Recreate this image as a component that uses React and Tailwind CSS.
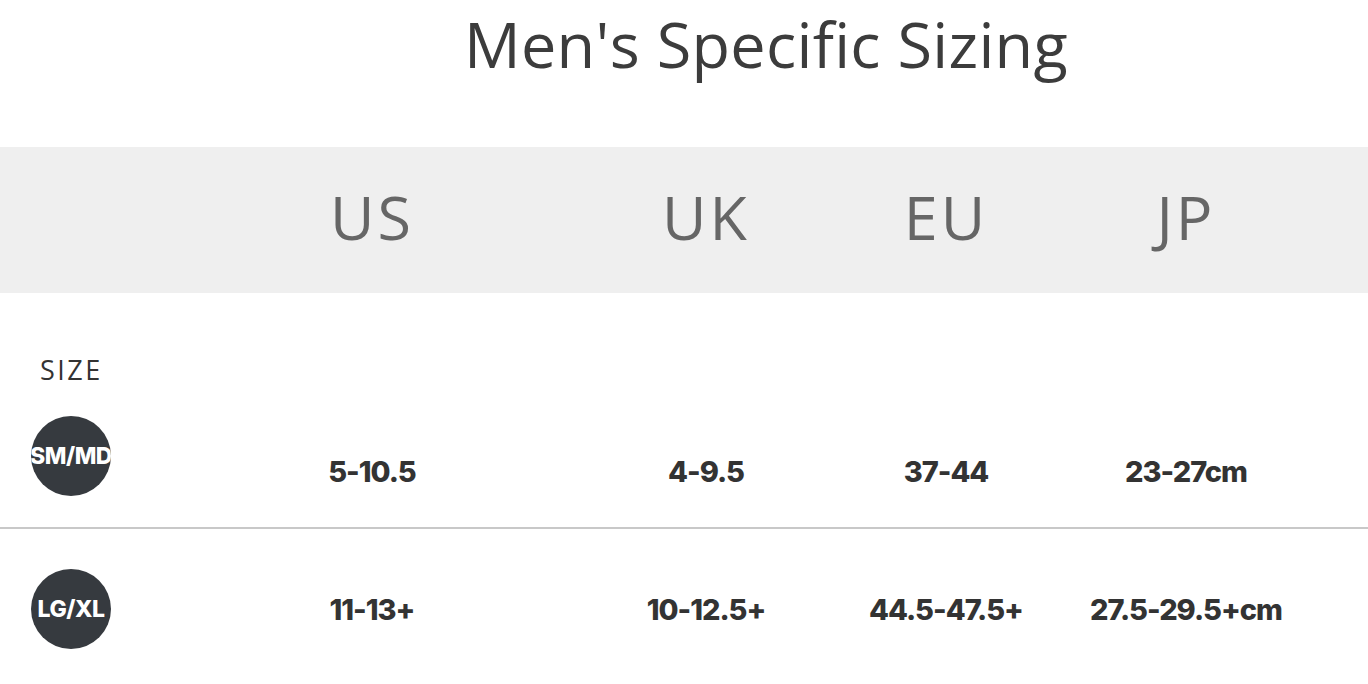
const columns = ['US', 'UK', 'EU', 'JP']

const rows = [
  { size: 'SM/MD', values: ['5-10.5', '4-9.5', '37-44', '23-27cm'] },
  { size: 'LG/XL', values: ['11-13+', '10-12.5+', '44.5-47.5+', '27.5-29.5+cm'] },
]

const grid = 'grid grid-cols-[158px_428px_240px_240px_240px]'

const SizeBadge = ({ label }) => (
  <div className="ml-[31px] w-20 h-20 rounded-full bg-[#363a3f] overflow-hidden flex items-center justify-center">
    <span className="whitespace-nowrap text-white font-extrabold text-[23px] leading-none tracking-[-0.5px] font-['Inter',sans-serif]">
      {label}
    </span>
  </div>
)

const Value = ({ children }) => (
  <div className="text-center text-[#333333] font-extrabold text-[29px] leading-none tracking-[-1px] font-['Inter',sans-serif]">
    {children}
  </div>
)

export default function App() {
  return (
    <div className="w-[1368px] h-[684px] bg-white overflow-hidden font-['Open_Sans',sans-serif]">
      <div className="h-[147px] pl-[164px] pt-[12px] flex justify-center">
        <h1 className="text-[63px] leading-none text-[#3c3c3c] font-normal tracking-[0.3px]">Men's Specific Sizing</h1>
      </div>

      <div className={`${grid} h-[146px] bg-[#efefef] items-center pb-[7px]`}>
        <div />
        {columns.map((c) => (
          <div key={c} className="text-center text-[61px] leading-none text-[#666666] tracking-[3px]">
            {c}
          </div>
        ))}
      </div>

      <div className="pt-[63px] pl-[40px] h-[123px]">
        <span className="text-[27px] leading-none text-[#333333] tracking-[2.5px]">SIZE</span>
      </div>

      <div className={`${grid} h-[111px] items-center`}>
        <div className="self-start">
          <SizeBadge label={rows[0].size} />
        </div>
        {rows[0].values.map((v) => (
          <Value key={v}>{v}</Value>
        ))}
      </div>

      <div className="h-[2px] bg-[#c8c8c8]" />

      <div className={`${grid} h-[160px] items-center`}>
        <SizeBadge label={rows[1].size} />
        {rows[1].values.map((v) => (
          <Value key={v}>{v}</Value>
        ))}
      </div>
    </div>
  )
}
